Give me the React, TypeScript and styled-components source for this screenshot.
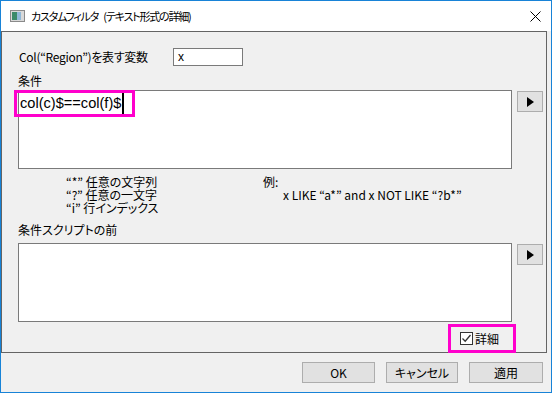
import React from "react";
import styled, { createGlobalStyle } from "styled-components";

const Global = createGlobalStyle`
  html, body {
    margin: 0;
    padding: 0;
    background: #f0f0f0;
  }
  * {
    box-sizing: border-box;
  }
`;

const Window = styled.div`
  width: 552px;
  height: 393px;
  border: 1px solid #1883d7;
  background: #f0f0f0;
  display: flex;
  flex-direction: column;
  font-family: "Noto Sans CJK JP", "Liberation Sans", sans-serif;
  font-feature-settings: "palt";
  font-size: 12px;
  color: #000;
`;

const TitleBar = styled.div`
  height: 30px;
  background: #fff;
  display: flex;
  align-items: center;
  padding: 0 0 0 9px;
`;

const Title = styled.div`
  flex: 1;
  margin-left: 6px;
  font-size: 11px;
  letter-spacing: -1.2px;
  word-spacing: 4px;
  line-height: 14px;
`;

const CloseBox = styled.div`
  width: 28px;
  height: 30px;
  display: flex;
  align-items: center;
  justify-content: center;
  margin-right: 2px;
`;

const Panel = styled.div`
  height: 322px;
  margin-right: 4px;
  border: 1px solid #646464;
  padding: 16px 0 0 16px;
  display: flex;
  flex-direction: column;
`;

const VarRow = styled.div`
  display: flex;
  align-items: center;
  height: 18px;
`;

const VarLabel = styled.div`
  width: 155px;
  padding-left: 1px;
  line-height: 14px;
  letter-spacing: -0.3px;
`;

const SmallInput = styled.div`
  width: 70px;
  height: 18px;
  border: 1px solid #7a7a7a;
  background: #fff;
  padding: 0 4px;
  line-height: 16px;
  font-family: "Liberation Sans", sans-serif;
  font-size: 12px;
`;

const SectionLabel = styled.div<{ $top: number }>`
  margin-top: ${(p) => p.$top}px;
  line-height: 14px;
  height: 14px;
`;

const EditRow = styled.div<{ $top: number }>`
  display: flex;
  align-items: flex-start;
  gap: 5px;
  margin-top: ${(p) => p.$top}px;
`;

const EditWrap = styled.div`
  position: relative;
`;

const EditBox = styled.div`
  width: 494px;
  height: 79px;
  border: 1px solid #7a7a7a;
  background: #fff;
  padding: 0 0 0 1px;
  font-family: "Liberation Sans", sans-serif;
  font-size: 14.6px;
  line-height: 24px;
  display: flex;
  align-items: flex-start;
`;

const Caret = styled.span`
  display: inline-block;
  width: 2px;
  height: 22px;
  margin: 1px 0 0 1px;
  background: #000;
`;

const Highlight = styled.div<{ $w: number; $h: number; $l: number; $t: number }>`
  position: absolute;
  left: ${(p) => p.$l}px;
  top: ${(p) => p.$t}px;
  width: ${(p) => p.$w}px;
  height: ${(p) => p.$h}px;
  border: 3px solid #ff00cc;
  pointer-events: none;
`;

const ArrowButton = styled.button`
  width: 26px;
  height: 21px;
  margin-top: 1px;
  border: 1px solid #adadad;
  background: #e1e1e1;
  padding: 0;
  display: flex;
  align-items: center;
  justify-content: center;
`;

const Hints = styled.div`
  display: grid;
  grid-template-columns: 197px 1fr;
  margin: 6px 0 0 48px;
`;

const HintCol = styled.div`
  display: flex;
  flex-direction: column;
`;

const HintLine = styled.div<{ $indent?: number }>`
  height: 13px;
  line-height: 13px;
  white-space: pre;
  padding-left: ${(p) => p.$indent || 0}px;
  font-size: 12px;
`;

const DetailRow = styled.div`
  display: flex;
  justify-content: flex-end;
  margin-top: auto;
  margin-right: 30px;
  margin-bottom: -1px;
  position: relative;
  z-index: 1;
`;

const DetailBox = styled.div`
  width: 68px;
  height: 29px;
  border: 3px solid #ff00cc;
  display: flex;
  align-items: center;
  padding-left: 9px;
  gap: 2px;
`;

const Check = styled.div`
  width: 13px;
  height: 13px;
  border: 1px solid #333;
  background: #fff;
  display: flex;
  align-items: center;
  justify-content: center;
`;

const Footer = styled.div`
  flex: 1;
  display: flex;
  justify-content: flex-end;
  align-items: flex-start;
  gap: 11px;
  padding: 9px 8px 0 0;
`;

const DlgButton = styled.button<{ $w: number }>`
  width: ${(p) => p.$w}px;
  height: 21px;
  border: 1px solid #adadad;
  background: #e1e1e1;
  font-family: "Noto Sans CJK JP", "Liberation Sans", sans-serif;
  font-feature-settings: "palt";
  font-size: 12px;
  line-height: 14px;
  color: #000;
  padding: 0;
`;

const PlayIcon = () => (
  <svg width="9" height="10" viewBox="0 0 9 10">
    <path d="M1 0 L8 5 L1 10 Z" fill="#000" />
  </svg>
);

const AppIcon = () => (
  <svg width="15" height="12" viewBox="0 0 15 12">
    <rect x="0.5" y="0.5" width="14" height="11" fill="#d9d9d9" stroke="#8a8a8a" />
    <rect x="2" y="2" width="5" height="8" fill="#3a8a6a" />
    <rect x="7" y="2" width="4" height="8" fill="#8fb8d8" />
  </svg>
);

const CloseIcon = () => (
  <svg width="11" height="11" viewBox="0 0 11 11">
    <path d="M0.5 0.5 L10.5 10.5 M10.5 0.5 L0.5 10.5" stroke="#000" strokeWidth="1" />
  </svg>
);

const CheckMark = () => (
  <svg width="11" height="11" viewBox="0 0 11 11">
    <path d="M1.5 5.5 L4.2 8.2 L9.5 2" stroke="#333" strokeWidth="1.3" fill="none" />
  </svg>
);

export default function App() {
  return (
    <>
      <Global />
      <Window>
        <TitleBar>
          <AppIcon />
          <Title>カスタムフィルタ (テキスト形式の詳細)</Title>
          <CloseBox>
            <CloseIcon />
          </CloseBox>
        </TitleBar>
        <Panel>
          <VarRow>
            <VarLabel>Col(“Region”)を表す変数</VarLabel>
            <SmallInput>x</SmallInput>
          </VarRow>
          <SectionLabel $top={8}>条件</SectionLabel>
          <EditRow $top={2}>
            <EditWrap>
              <EditBox>
                col(c)$==col(f)$
                <Caret />
              </EditBox>
              <Highlight $l={-4} $t={0} $w={121} $h={27} />
            </EditWrap>
            <ArrowButton>
              <PlayIcon />
            </ArrowButton>
          </EditRow>
          <Hints>
            <HintCol>
              <HintLine>“*” 任意の文字列</HintLine>
              <HintLine>“?” 任意の一文字</HintLine>
              <HintLine>“i” 行インデックス</HintLine>
            </HintCol>
            <HintCol>
              <HintLine>例:</HintLine>
              <HintLine $indent={20}>x LIKE “a*” and x NOT LIKE “?b*”</HintLine>
            </HintCol>
          </Hints>
          <SectionLabel $top={9}>条件スクリプトの前</SectionLabel>
          <EditRow $top={6}>
            <EditBox />
            <ArrowButton>
              <PlayIcon />
            </ArrowButton>
          </EditRow>
          <DetailRow>
            <DetailBox>
              <Check>
                <CheckMark />
              </Check>
              <span>詳細</span>
            </DetailBox>
          </DetailRow>
        </Panel>
        <Footer>
          <DlgButton $w={73}>OK</DlgButton>
          <DlgButton $w={72}>キャンセル</DlgButton>
          <DlgButton $w={74}>適用</DlgButton>
        </Footer>
      </Window>
    </>
  );
}
